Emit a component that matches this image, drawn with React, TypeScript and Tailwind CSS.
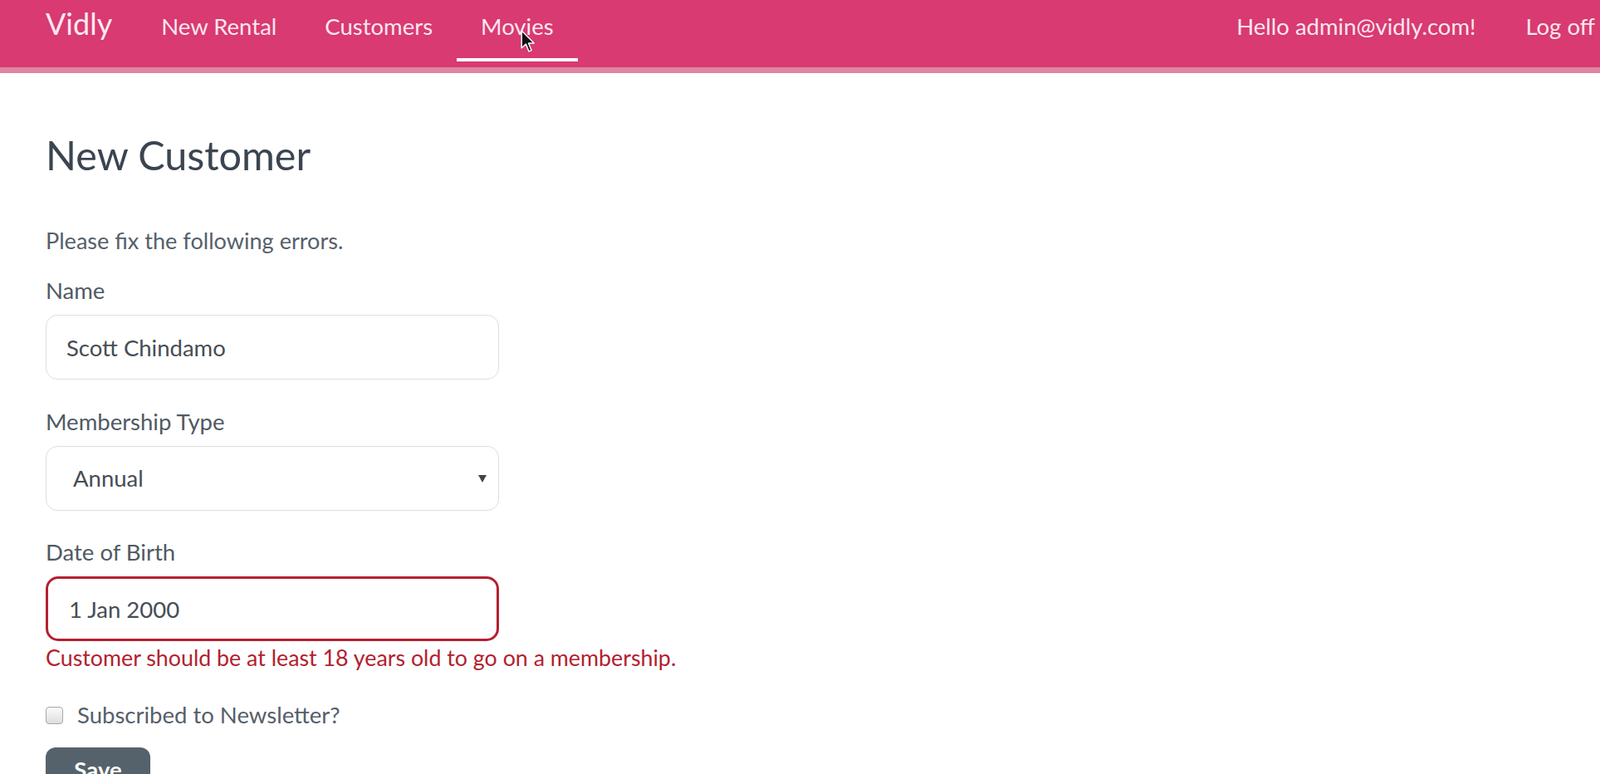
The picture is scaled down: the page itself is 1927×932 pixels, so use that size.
import React from "react";

function NavLink({ label, active }: { label: string; active?: boolean }) {
  return (
    <a href="#" className="relative flex h-full items-start px-[29px] pt-[16px] text-[27.5px] leading-[32px] text-[#fbe6ee]">
      {label}
      {active && <span className="absolute bottom-[7px] left-0 right-0 h-[4px] bg-white" />}
    </a>
  );
}

function Cursor() {
  return (
    <svg className="absolute left-[627px] top-[36px]" width="19" height="28" viewBox="0 0 18 27">
      <path
        d="M1 1 L1 21 L6 16.5 L9.5 25 L12.5 23.8 L9 15.5 L15.5 15.5 Z"
        fill="#111"
        stroke="#fff"
        strokeWidth="1.4"
        strokeLinejoin="round"
      />
    </svg>
  );
}

function Label({ children }: { children: React.ReactNode }) {
  return <div className="mb-[13px] text-[27.5px] leading-[32px] text-[#505a63]">{children}</div>;
}

export default function App() {
  return (
    <div className="min-h-screen bg-white font-['Lato','Noto_Sans',sans-serif]">
      <nav className="relative flex h-[88px] items-stretch border-b-[7px] border-[#df84a1] bg-[#d83a71] pl-[55px] pr-[6px]">
        <a href="#" className="mr-[30px] pt-[8px] text-[36px] leading-[40px] text-[#fbe8f0]">
          Vidly
        </a>
        <NavLink label="New Rental" />
        <NavLink label="Customers" />
        <NavLink label="Movies" active />
        <div className="ml-auto flex items-start gap-[60px] pt-[16px] text-[27.5px] leading-[32px] text-[#fbe6ee]">
          <a href="#">Hello admin@vidly.com!</a>
          <a href="#">Log off</a>
        </div>
        <Cursor />
      </nav>

      <main className="pl-[55px]">
        <h2 className="mt-[71px] text-[48.5px] leading-[54px] text-[#3b4550]">New Customer</h2>

        <p className="mt-[61px] mb-[28px] text-[27.1px] leading-[32px] text-[#56606a]">
          Please fix the following errors.
        </p>

        <div className="w-[546px]">
          <Label>Name</Label>
          <input
            readOnly
            value="Scott Chindamo"
            className="h-[78px] w-full rounded-[14px] border border-[#dedede] bg-white pl-[24px] text-[27.5px] text-[#474d54] outline-none"
          />

          <div className="mt-[35px]">
            <Label>Membership Type</Label>
            <div className="flex h-[78px] w-full items-center justify-between rounded-[14px] border border-[#dedede] bg-white pl-[32px] pr-[14px] text-[27.5px] text-[#474d54]">
              <span>Annual</span>
              <svg width="10" height="9" viewBox="0 0 10 9">
                <path d="M0 0 H10 L5 9 Z" fill="#444" />
              </svg>
            </div>
          </div>

          <div className="mt-[34px]">
            <Label>Date of Birth</Label>
            <input
              readOnly
              value="1 Jan 2000"
              className="h-[78px] w-full rounded-[15px] border-[3px] border-[#b3212f] bg-white pl-[25px] text-[27.5px] text-[#474d54] outline-none"
            />
          </div>
        </div>

        <div className="mt-[4px] text-[26.8px] leading-[32px] text-[#b3212f]">
          Customer should be at least 18 years old to go on a membership.
        </div>

        <label className="mt-[37px] flex items-center gap-[17px] text-[27.5px] leading-[32px] text-[#56606a]">
          <span className="h-[21px] w-[21px] rounded-[4px] border border-[#a8a8a8] bg-gradient-to-b from-[#fbfbfb] to-[#dedede]" />
          Subscribed to Newsletter?
        </label>

        <button
          type="button"
          className="mt-[23px] h-[62px] w-[126px] rounded-[12px] bg-[#56626b] pb-[8px] text-[27.5px] font-bold leading-[32px] text-white"
        >
          Save
        </button>
      </main>
    </div>
  );
}
